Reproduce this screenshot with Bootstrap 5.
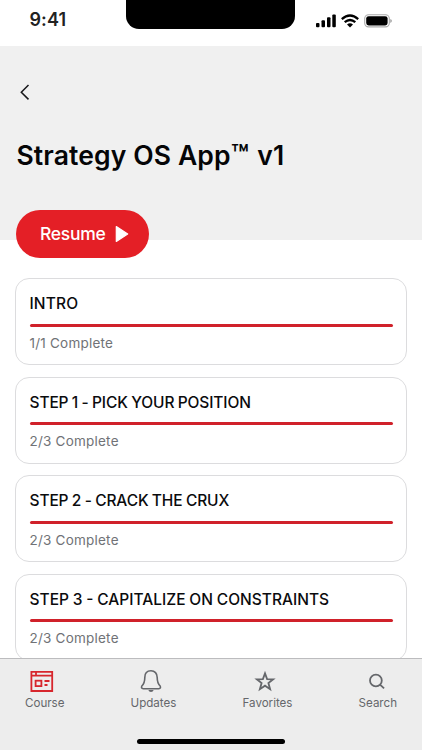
<!DOCTYPE html>
<html lang="en">
<head>
<meta charset="utf-8">
<meta name="viewport" content="width=device-width, initial-scale=1">
<title>Strategy OS App</title>
<link href="https://cdn.jsdelivr.net/npm/bootstrap@5.3.0/dist/css/bootstrap.min.css" rel="stylesheet">
<style>
body{font-family:Inter,"Liberation Sans",sans-serif;background:#fff;color:#0b0b0d}
.screen{height:750px}
.status{height:45.5px}
.clock{font-size:18px;font-weight:600;line-height:20px;letter-spacing:.1px;padding:10px 0 0 29.5px;color:#222;width:126.4px}
.notch{width:169px;height:29px;border-radius:0 0 13px 13px;background:#000}
.signals{padding:14px 30px 0 0;gap:5px}
.hero{height:194px;background:#f0f0f0;padding:38px 16px 0}
.back{margin-left:4px;width:10px;height:16px}
.hero h1{font-size:26.5px;font-weight:600;line-height:32px;margin:39px 0 39.5px .5px;letter-spacing:.12px;color:#050507}
.hero h1 .tm{letter-spacing:1.5px;font-size:29px;line-height:1}
.resume{width:132.5px;height:48px;background:#e41f26;color:#fff;font-size:17.5px;font-weight:500;letter-spacing:-.3px;gap:10px;padding:0 0 0 5px}
.lessons{padding:38.5px 15px 0;gap:11.6px}
.lesson{height:87px;border:1px solid #dcdcde;border-radius:14px;padding:15px 13.5px 0}
.lesson h2{font-size:15.5px;font-weight:550;line-height:20px;letter-spacing:-.12px;word-spacing:-.6px;margin:0 0 9.5px}
.lesson h2.short{letter-spacing:.15px}
.lesson h2.long{letter-spacing:0;word-spacing:-.3px}
.track{height:3px;border-radius:2px;background:#d0212a}
.lesson p{font-size:13.5px;line-height:18px;margin:7px 0 0;color:#707276;letter-spacing:.22px}
.tabs{height:92px;background:#ededed;border-top:1px solid #bcbcbe;padding:10px 25px 0;color:#65676b}
.tabs a{font-size:11.6px;line-height:16px;gap:2px;letter-spacing:-.02px}
.tabs svg{margin-left:-4.5px}
.home{width:148px;height:5px;border-radius:3px;background:#000;margin-bottom:6px}
</style>
<script src="https://cdn.jsdelivr.net/npm/bootstrap@5.3.0/dist/js/bootstrap.bundle.min.js"></script>
</head>
<body>
<div class="screen d-flex flex-column overflow-hidden">
  <header class="status d-flex flex-shrink-0">
    <div class="clock flex-shrink-0">9:41</div>
    <div class="notch flex-shrink-0"></div>
    <div class="signals d-flex ms-auto align-items-start">
      <svg width="20" height="14" viewBox="0 0 20 14"><g><rect x="0" y="9" width="3.5" height="4.3" rx="1"/><rect x="5.5" y="6.3" width="3.5" height="7" rx="1"/><rect x="11" y="3.3" width="3.5" height="10" rx="1"/><rect x="16.3" y=".4" width="3.5" height="12.9" rx="1"/></g></svg>
      <svg width="18" height="14" viewBox="0 0 18 14" fill="none" stroke="#000" stroke-width="2.3"><path d="M.8 5.1Q9-2 17.2 5.1M3.7 8.2Q9 3.8 14.3 8.2"/><path d="M6 10.5Q9 8 12 10.5L9 13.4Z" fill="#000" stroke="none"/></svg>
      <svg width="28" height="14" viewBox="0 0 28 14"><rect x=".7" y=".7" width="24.6" height="12.2" rx="3.8" fill="none" stroke="#aaa" stroke-width="1.1"/><rect x="2.2" y="2.2" width="21.4" height="9.2" rx="2.4"/><path d="M26.2 4.9Q28 5.5 28 6.8T26.2 8.9Z" fill="#aaa"/></svg>
    </div>
  </header>
  <section class="hero flex-shrink-0">
    <svg class="back d-block" viewBox="0 0 10 16" fill="none" stroke="#17171a" stroke-width="1.5"><path d="M8.5 1 1.3 8.2 8.5 15.4"/></svg>
    <h1 class="text-nowrap">Strategy OS App<span class="tm">™</span> v1</h1>
    <button class="btn resume rounded-pill border-0 d-flex align-items-center justify-content-center"><span>Resume</span><svg width="14" height="18" viewBox="0 0 14 18"><path d="M1.3 1.6 12.7 9 1.3 16.4Z" fill="#fff" stroke="#fff" stroke-width="1.2" stroke-linejoin="round"/></svg></button>
  </section>
  <main class="lessons d-flex flex-column flex-grow-1 overflow-hidden">
    <article class="lesson flex-shrink-0"><h2 class="short text-nowrap">INTRO</h2><div class="track"></div><p>1/1 Complete</p></article>
    <article class="lesson flex-shrink-0"><h2 class="text-nowrap">STEP 1 - PICK YOUR POSITION</h2><div class="track"></div><p>2/3 Complete</p></article>
    <article class="lesson flex-shrink-0"><h2 class="text-nowrap">STEP 2 - CRACK THE CRUX</h2><div class="track"></div><p>2/3 Complete</p></article>
    <article class="lesson flex-shrink-0"><h2 class="long text-nowrap">STEP 3 - CAPITALIZE ON CONSTRAINTS</h2><div class="track"></div><p>2/3 Complete</p></article>
  </main>
  <footer class="tabs d-flex flex-column flex-shrink-0">
    <nav class="d-flex justify-content-between">
      <a class="d-flex flex-column align-items-center text-reset text-decoration-none"><svg width="24" height="24" viewBox="0 0 24 24" fill="none" stroke="#d7262d" stroke-width="1.8"><path d="M1.4 2.9H22.2V22H1.4ZM1.4 6.7H22.2M6 3V6.5M14.5 12H19.5M14.5 16H17.5"/><rect x="5.6" y="11.7" width="5.8" height="5.4"/></svg><span>Course</span></a>
      <a class="d-flex flex-column align-items-center text-reset text-decoration-none"><svg width="24" height="24" viewBox="0 0 24 24" fill="none" stroke="#65676b" stroke-width="1.6" stroke-linejoin="round"><path d="M12 1.8C8.2 1.8 5.8 4.4 5.8 8.5 5.8 13.4 4.5 15.5 2.8 17Q1.8 19.6 4.2 19.7H19.8Q22.2 19.6 21.2 17C19.5 15.5 18.2 13.4 18.2 8.5 18.2 4.4 15.8 1.8 12 1.8Z"/><path d="M9.3 21H14.7Q14 23 12 23T9.3 21Z" fill="#65676b" stroke="none"/></svg><span>Updates</span></a>
      <a class="d-flex flex-column align-items-center text-reset text-decoration-none"><svg width="24" height="24" viewBox="0 0 24 24" fill="none" stroke="#65676b" stroke-width="1.8"><path d="M12 4.4 14.1 10.1 20.2 10.3 15.4 14.1 17.1 20.2 12 16.7 6.9 20.2 8.6 14.1 3.8 10.3 9.9 10.1Z"/></svg><span>Favorites</span></a>
      <a class="d-flex flex-column align-items-center text-reset text-decoration-none"><svg width="24" height="24" viewBox="0 0 24 24" fill="none" stroke="#65676b" stroke-width="1.8"><circle cx="11.9" cy="11.5" r="5.9"/><path d="M16 15.6 20.1 19.4"/></svg><span>Search</span></a>
    </nav>
    <div class="home mx-auto mt-auto"></div>
  </footer>
</div>
</body>
</html>
